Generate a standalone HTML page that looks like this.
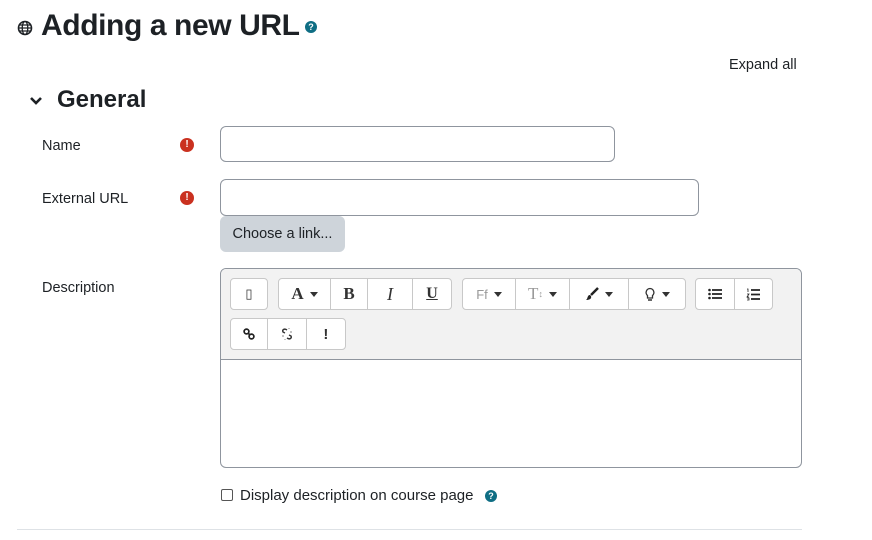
<!DOCTYPE html>
<html><head><meta charset="utf-8"><style>
*{box-sizing:border-box;margin:0;padding:0}
body{width:872px;height:540px;background:#fff;font-family:"Liberation Sans",sans-serif;color:#1d2125;position:relative;overflow:hidden}
.a{position:absolute}
h1{position:absolute;left:41px;top:11px;font-size:30px;font-weight:bold;letter-spacing:-0.4px;white-space:nowrap;line-height:30px}
.lbl{position:absolute;left:42px;font-size:14.5px;color:#1d2125}
.err{position:absolute;width:14px;height:14px;border-radius:50%;background:#ca3120;color:#fff;font-size:10px;font-weight:bold;text-align:center;line-height:14px}
.inp{position:absolute;border:1px solid #8f959e;border-radius:6px;background:#fff}
.grp{position:absolute;top:0;height:32px;border:1px solid #c8c8c8;border-radius:4px;background:#fff;display:flex}
.grp div{height:100%;border-right:1px solid #c8c8c8;display:flex;align-items:center;justify-content:center;font-size:15px;color:#333}
.grp div:last-child{border-right:none}
.car{display:inline-block;width:0;height:0;border-left:4px solid transparent;border-right:4px solid transparent;border-top:5px solid #333;margin-left:6px}
.help{position:absolute;width:12px;height:12px;border-radius:50%;background:#0f6e84;color:#fff;font-size:9px;font-weight:bold;text-align:center;line-height:12px}
</style></head><body>
<svg class="a" style="left:17px;top:20px" width="16" height="16" viewBox="0 0 16 16"><circle cx="8" cy="8" r="6.5" fill="none" stroke="#1d2125" stroke-width="1.6"/><ellipse cx="8" cy="8" rx="2.8" ry="6.5" fill="none" stroke="#1d2125" stroke-width="1.3"/><path d="M1.5 8H14.5M2.5 5H13.5M2.5 11H13.5" stroke="#1d2125" stroke-width="1.2"/></svg>
<h1>Adding a new URL</h1>
<div class="help" style="left:305px;top:21px">?</div>
<div class="a" style="left:729px;top:57px;font-size:14.5px;color:#1d2125">Expand all</div>
<svg class="a" style="left:29px;top:95px" width="14" height="12" viewBox="0 0 14 12"><path d="M2 3L7 8L12 3" fill="none" stroke="#1d2125" stroke-width="2.6"/></svg>
<div class="a" style="left:57px;top:86px;font-size:24px;font-weight:bold">General</div>

<div class="lbl" style="top:138px">Name</div>
<div class="err" style="left:180px;top:138px">!</div>
<div class="inp" style="left:220px;top:126px;width:395px;height:36px"></div>

<div class="lbl" style="top:191px">External URL</div>
<div class="err" style="left:180px;top:191px">!</div>
<div class="inp" style="left:220px;top:179px;width:479px;height:37px"></div>
<div class="a" style="left:220px;top:216px;width:125px;height:36px;background:#ced4da;border-radius:6px;font-size:14.5px;line-height:36px;text-align:center;color:#1d2125">Choose a link...</div>

<div class="lbl" style="top:280px">Description</div>
<div class="a" style="left:220px;top:268px;width:582px;height:200px;border:1px solid #8f959e;border-radius:6px;overflow:hidden">
 <div class="a" style="left:0;top:0;width:580px;height:91px;background:#f2f2f2;border-bottom:1px solid #8f959e">
  <div class="a" style="left:9px;top:9px;width:780px;height:33px">
   <div class="grp" style="left:0;width:38px"><div style="width:38px;font-size:13px">&#x25AF;</div></div>
   <div class="grp" style="left:48px;width:174px"><div style="width:52px;font-family:'Liberation Serif',serif;font-weight:bold;font-size:17px">A<span class="car"></span></div><div style="width:37px;font-family:'Liberation Serif',serif;font-weight:bold;font-size:17px">B</div><div style="width:45px;font-family:'Liberation Serif',serif;font-style:italic;font-size:18px">I</div><div style="width:38px;font-family:'Liberation Serif',serif;text-decoration:underline;font-weight:bold;font-size:16px">U</div></div>
   <div class="grp" style="left:232px;width:224px"><div style="width:53px;color:#999;font-size:13px">Ff<span class="car"></span></div><div style="width:54px;color:#999;font-family:'Liberation Serif',serif;font-size:17px">T<span style="font-size:9px">&#x2195;</span><span class="car"></span></div><div style="width:59px"><svg width="14" height="14" viewBox="0 0 14 14"><path d="M13 1L6 8" stroke="#222" stroke-width="2.5"/><path d="M5 8C2 8 3 12 1 13C4 13 7 12 6 9Z" fill="#222"/></svg><span class="car"></span></div><div style="width:56px"><svg width="12" height="15" viewBox="0 0 12 15"><path d="M6 1.5A4 4 0 0 0 3.5 8.5V11H8.5V8.5A4 4 0 0 0 6 1.5Z" fill="none" stroke="#333" stroke-width="1.3"/><path d="M4 13H8" stroke="#333" stroke-width="1.5"/></svg><span class="car"></span></div></div>
   <div class="grp" style="left:465px;width:78px"><div style="width:39px"><svg width="14" height="12" viewBox="0 0 14 12"><circle cx="1.5" cy="2" r="1.3" fill="#222"/><circle cx="1.5" cy="6" r="1.3" fill="#222"/><circle cx="1.5" cy="10" r="1.3" fill="#222"/><path d="M4 2H14M4 6H14M4 10H14" stroke="#222" stroke-width="1.8"/></svg></div><div style="width:38px"><svg width="14" height="13" viewBox="0 0 14 13"><path d="M1 1H2V4M1 6H3L1 9H3M1 10H3V12H1" stroke="#222" stroke-width="0.8" fill="none"/><path d="M5 2H14M5 6.5H14M5 11H14" stroke="#222" stroke-width="1.8"/></svg></div></div>
  </div>
  <div class="a" style="left:9px;top:49px;width:120px;height:33px">
   <div class="grp" style="left:0;width:116px"><div style="width:38px"><svg width="12" height="12" viewBox="0 0 12 12"><circle cx="3.5" cy="3.5" r="2.4" fill="none" stroke="#222" stroke-width="1.7"/><circle cx="8.5" cy="8.5" r="2.4" fill="none" stroke="#222" stroke-width="1.7"/><path d="M5 5L7 7" stroke="#222" stroke-width="1.7"/></svg></div><div style="width:39px"><svg width="14" height="14" viewBox="0 0 14 14"><path d="M7 3C4 1 2 3 3 5L5 6M7 11C10 13 12 11 11 9L9 8" fill="none" stroke="#333" stroke-width="1.4"/><path d="M2 9L4 9M10 5L12 5M5 12L5 13M9 1L9 2" stroke="#888" stroke-width="1"/></svg></div><div style="width:39px;font-weight:bold;font-size:15px">!</div></div>
  </div>
 </div>
</div>

<div class="a" style="left:221px;top:489px;width:12px;height:12px;border:1px solid #555;border-radius:2px;background:#fff"></div>
<div class="a" style="left:240px;top:487px;font-size:15px">Display description on course page</div>
<div class="help" style="left:485px;top:490px">?</div>
<div class="a" style="left:17px;top:529px;width:785px;height:1px;background:#dee2e6"></div>
</body></html>
